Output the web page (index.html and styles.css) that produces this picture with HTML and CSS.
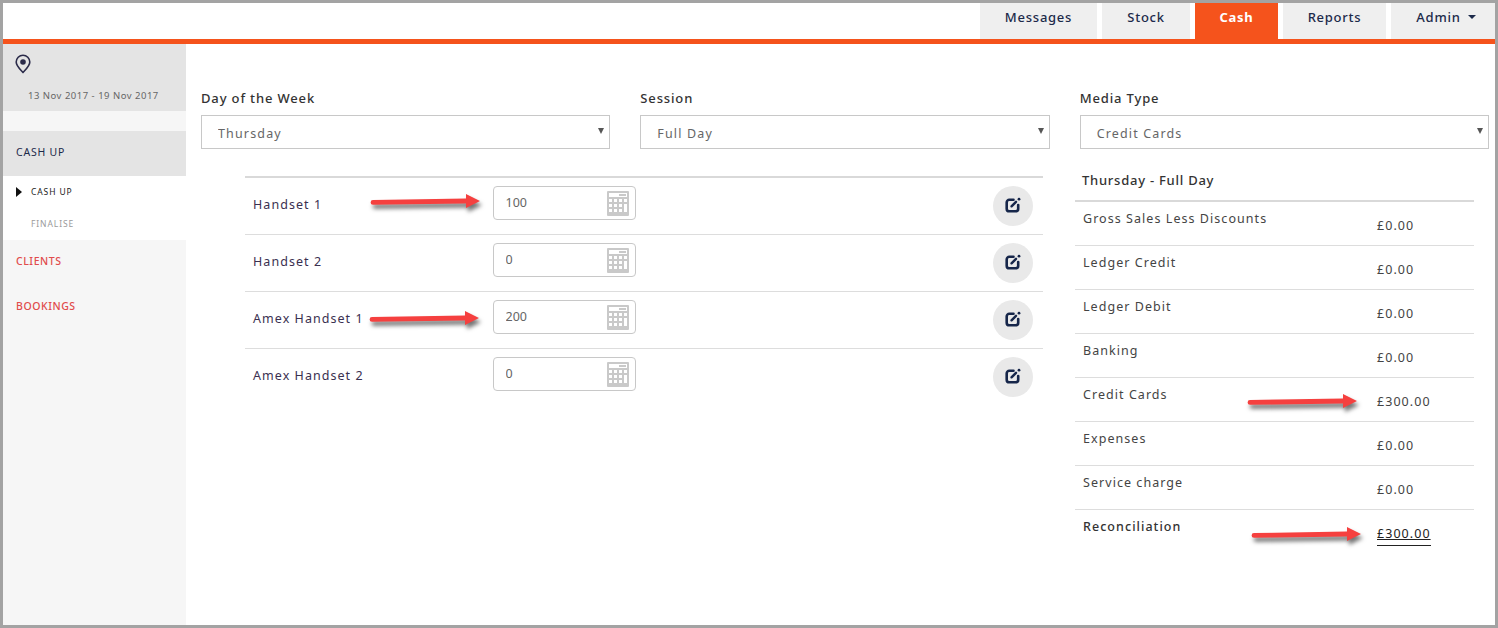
FILE: index.html
```html
<!DOCTYPE html>
<html lang="en">
<head>
<meta charset="utf-8">
<title>Cash Up</title>
<link rel="stylesheet" href="styles.css">
</head>
<body>
<div class="frame">
  <header class="topbar">
    <a class="tab tab-messages">Messages</a>
    <a class="tab tab-stock">Stock</a>
    <a class="tab tab-cash active">Cash</a>
    <a class="tab tab-reports">Reports</a>
    <a class="tab tab-admin">Admin <span class="caret"></span></a>
  </header>
  <div class="layout">
    <aside class="sidebar">
      <div class="site">
        <svg class="pin" viewBox="0 0 16 20" width="16" height="20"><path d="M8 1.2a6.8 6.8 0 0 0-6.8 6.8c0 3.9 3.6 6.9 6.8 10.4 3.2-3.5 6.8-6.500 6.800-10.400A6.800 6.800 0 0 0 8 1.200z" fill="none" stroke="#2b2b4a" stroke-width="1.600"/><circle cx="8" cy="8" r="2.800" fill="#2b2b4a"/></svg>
        <div class="dates">13 Nov 2017 - 19 Nov 2017</div>
      </div>
      <div class="spacer"></div>
      <div class="nav-current">CASH UP</div>
      <ul class="subnav">
        <li class="sub-active">CASH UP</li>
        <li>FINALISE</li>
      </ul>
      <div class="nav-link">CLIENTS</div>
      <div class="nav-link">BOOKINGS</div>
    </aside>
    <main class="main">
      <section class="filters">
        <div class="field">
          <label class="field-label" for="day">Day of the Week</label>
          <div class="select-wrap"><select id="day"><option>Thursday</option></select></div>
        </div>
        <div class="field">
          <label class="field-label" for="session">Session</label>
          <div class="select-wrap"><select id="session"><option>Full Day</option></select></div>
        </div>
        <div class="field">
          <label class="field-label" for="media">Media Type</label>
          <div class="select-wrap"><select id="media"><option>Credit Cards</option></select></div>
        </div>
      </section>
      <section class="content">
        <div class="handsets">
          <div class="handset">
            <span class="handset-name">Handset 1</span>
            <div class="amount"><input value="100"><svg class="calc" viewBox="0 0 22 25" width="22" height="25"><use href="#calc-icon"/></svg></div>
            <button class="edit"><svg viewBox="0 0 16 16" width="16" height="16"><use href="#edit-icon"/></svg></button>
          </div>
          <div class="handset">
            <span class="handset-name">Handset 2</span>
            <div class="amount"><input value="0"><svg class="calc" viewBox="0 0 22 25" width="22" height="25"><use href="#calc-icon"/></svg></div>
            <button class="edit"><svg viewBox="0 0 16 16" width="16" height="16"><use href="#edit-icon"/></svg></button>
          </div>
          <div class="handset">
            <span class="handset-name">Amex Handset 1</span>
            <div class="amount"><input value="200"><svg class="calc" viewBox="0 0 22 25" width="22" height="25"><use href="#calc-icon"/></svg></div>
            <button class="edit"><svg viewBox="0 0 16 16" width="16" height="16"><use href="#edit-icon"/></svg></button>
          </div>
          <div class="handset">
            <span class="handset-name">Amex Handset 2</span>
            <div class="amount"><input value="0"><svg class="calc" viewBox="0 0 22 25" width="22" height="25"><use href="#calc-icon"/></svg></div>
            <button class="edit"><svg viewBox="0 0 16 16" width="16" height="16"><use href="#edit-icon"/></svg></button>
          </div>
        </div>
        <div class="summary">
          <h2 class="summary-title">Thursday - Full Day</h2>
          <div class="summary-row"><span>Gross Sales Less Discounts</span><span class="val">£0.00</span></div>
          <div class="summary-row"><span>Ledger Credit</span><span class="val">£0.00</span></div>
          <div class="summary-row"><span>Ledger Debit</span><span class="val">£0.00</span></div>
          <div class="summary-row"><span>Banking</span><span class="val">£0.00</span></div>
          <div class="summary-row"><span>Credit Cards</span><span class="val">£300.00</span></div>
          <div class="summary-row"><span>Expenses</span><span class="val">£0.00</span></div>
          <div class="summary-row"><span>Service charge</span><span class="val">£0.00</span></div>
          <div class="summary-row total"><span>Reconciliation</span><span class="val"><span class="total-val">£300.00</span></span></div>
        </div>
      </section>
    </main>
  </div>
  <svg class="arrow arrow-1" viewBox="0 0 120 24" width="120" height="24"><use href="#arrow-shape"/></svg>
  <svg class="arrow arrow-2" viewBox="0 0 120 24" width="120" height="24"><use href="#arrow-shape"/></svg>
  <svg class="arrow arrow-3" viewBox="0 0 120 24" width="120" height="24"><use href="#arrow-shape"/></svg>
  <svg class="arrow arrow-4" viewBox="0 0 120 24" width="120" height="24"><use href="#arrow-shape"/></svg>
</div>
<svg class="defs" width="0" height="0">
  <defs>
    <symbol id="calc-icon" viewBox="0 0 22 25">
      <path fill="#c9c9c9" fill-rule="evenodd" d="M1 0h20a1 1 0 0 1 1 1v23a1 1 0 0 1-1 1H1a1 1 0 0 1-1-1V1a1 1 0 0 1 1-1zM2 2v4h18V2zM2 8v3h3V8zM7 8v3h3V8zM12 8v3h3V8zM17 8v3h3V8zM2 13v3h3v-3zM7 13v3h3v-3zM12 13v3h3v-3zM17 13v8h3v-8zM2 18v3h3v-3zM7 18v3h3v-3zM12 18v3h3v-3z"/>
      <rect x="12" y="3" width="7" height="2" fill="#c9c9c9"/>
    </symbol>
    <symbol id="edit-icon" viewBox="0 0 16 16">
      <path d="M8.500 2.800H4.300A2.600 2.600 0 0 0 1.700 5.400v6.300a2.600 2.600 0 0 0 2.600 2.600h6.300a2.600 2.600 0 0 0 2.600-2.600V8" fill="none" stroke="#16264a" stroke-width="2.600" stroke-linecap="round"/>
      <path d="M6.500 9.300L11 4.800" stroke="#16264a" stroke-width="2.400" stroke-linecap="round"/>
      <circle cx="14" cy="2.200" r="1.400" fill="#16264a"/>
    </symbol>
    <symbol id="arrow-shape" viewBox="0 0 120 24">
      <path d="M4 10L97 8.500V4L111 11L97 18V13.500L4 14.800a2.400 2.400 0 0 1 0-4.800z" fill="#f5403f"/>
    </symbol>
  </defs>
</svg>
</body>
</html>
```
FILE: styles.css
```css
* { box-sizing: border-box; }
html, body { margin: 0; padding: 0; }
body {
  font-family: "Noto Sans", "Open Sans", sans-serif;
  color: #333;
  background: #fff;
  width: 1498px;
  height: 628px;
  overflow: hidden;
}
.frame {
  position: relative;
  width: 1498px;
  height: 628px;
  border: 3px solid #a3a3a3;
  display: flex;
  flex-direction: column;
  background: #fff;
}
.defs { position: absolute; }

/* top bar */
.topbar {
  display: flex;
  justify-content: flex-end;
  height: 41px;
  border-bottom: 5px solid #f5531c;
  flex: none;
}
.tab {
  display: flex;
  align-items: center;
  justify-content: center;
  margin-left: 5px;
  height: 36px;
  background: #efefef;
  color: #1c2a4a;
  font-size: 13px;
  font-weight: 500;
  letter-spacing: .75px;
  padding-bottom: 8px;
}
.tab-messages { width: 117px; }
.tab-stock { width: 88px; }
.tab-cash { width: 83px; }
.tab-reports { width: 103px; }
.tab-admin { width: 104px; padding-left: 6px; }
.tab.active { background: #f5531c; color: #fff; font-weight: 700; }
.caret {
  display: inline-block;
  margin-left: 7px;
  border-left: 4px solid transparent;
  border-right: 4px solid transparent;
  border-top: 4px solid #1c2a4a;
}

/* layout */
.layout { display: flex; flex: 1; min-height: 0; }
.sidebar {
  width: 183px;
  flex: none;
  background: #f6f6f6;
  display: flex;
  flex-direction: column;
}
.site { height: 67px; background: #e4e4e4; padding: 10px 0 0 12px; }
.pin { display: block; }
.dates {
  margin-top: 15px;
  margin-left: 13px;
  font-size: 9.500px;
  letter-spacing: .5px;
  color: #666;
  line-height: 14px;
}
.spacer { height: 20px; }
.nav-current {
  height: 45px;
  background: #e4e4e4;
  padding: 0 0 3px 13px;
  display: flex;
  align-items: center;
  font-size: 10.500px;
  letter-spacing: .8px;
  color: #1c2a4a;
}
.subnav {
  list-style: none;
  margin: 0;
  padding: 1px 0 0 28px;
  background: #fff;
  height: 64px;
  font-size: 8.500px;
  letter-spacing: .9px;
  color: #9a9a9a;
}
.subnav li { height: 32px; line-height: 29px; position: relative; }
.sub-active { color: #222; }
.sub-active::before {
  content: "";
  position: absolute;
  left: -15px;
  top: 10px;
  border-top: 5px solid transparent;
  border-bottom: 5px solid transparent;
  border-left: 6px solid #111;
}
.nav-link {
  height: 45px;
  padding: 14px 0 0 13px;
  font-size: 10.500px;
  font-weight: 500;
  line-height: 14px;
  letter-spacing: .55px;
  color: #e14c4c;
}

/* main */
.main { flex: 1; padding: 41px 6px 0 15px; min-width: 0; }
.filters {
  display: grid;
  grid-template-columns: repeat(3, 1fr);
  column-gap: 30px;
}
.field-label {
  display: block;
  height: 30px;
  line-height: 27px;
  font-size: 13px;
  font-weight: 500;
  letter-spacing: .85px;
  color: #333;
}
.select-wrap { position: relative; }
.select-wrap::after {
  content: "";
  position: absolute;
  right: 6px;
  top: 13px;
  border-left: 3px solid transparent;
  border-right: 3px solid transparent;
  border-top: 6px solid #555;
}
.select-wrap select {
  display: block;
  width: 100%;
  height: 34px;
  appearance: none;
  -webkit-appearance: none;
  background: #fff;
  border: 1px solid #c8c8c8;
  border-radius: 0;
  padding: 2px 16px 0;
  font: inherit;
  font-size: 12.500px;
  letter-spacing: 1.150px;
  color: #666;
}

.content { display: flex; padding-top: 27px; align-items: flex-start; }
.handsets {
  width: 798px;
  margin-left: 44px;
  border-top: 2px solid #d9d9d9;
  flex: none;
}
.handset {
  height: 57px;
  border-bottom: 1px solid #ddd;
  display: flex;
  align-items: flex-start;
  padding: 8px 10px 0 8px;
}
.handset:last-child { border-bottom: 0; }
.handset-name {
  width: 240px;
  flex: none;
  font-size: 12.500px;
  letter-spacing: 1.050px;
  color: #3a3050;
  line-height: 38px;
}
.amount { position: relative; width: 143px; height: 34px; flex: none; }
.amount input {
  display: block;
  width: 100%;
  height: 34px;
  border: 1px solid #c8c8c8;
  border-radius: 4px;
  padding: 0 11.500px 2px;
  font: inherit;
  font-size: 12.500px;
  color: #666;
  background: #fff;
  outline: 0;
}
.calc { position: absolute; right: 7px; top: 5px; }
.edit {
  margin-left: auto;
  width: 40px;
  height: 40px;
  border: 0;
  padding: 0 0 2px;
  border-radius: 50%;
  background: #e9e9e9;
  display: flex;
  align-items: center;
  justify-content: center;
}

.summary { width: 399px; margin: -27px 0 0 32px; flex: none; }
.summary-title {
  margin: 0;
  height: 53px;
  padding: 21px 0 0 7px;
  border-bottom: 2px solid #d9d9d9;
  font-size: 13px;
  font-weight: 500;
  letter-spacing: .75px;
  line-height: 20px;
  color: #333;
}
.summary-row {
  display: grid;
  grid-template-columns: 302px 1fr;
  height: 44px;
  padding: 8px 0 0 8px;
  border-bottom: 1px solid #ddd;
  font-size: 12.500px;
  letter-spacing: 1.050px;
  line-height: 17px;
  color: #444;
}
.summary-row .val { padding-top: 7px; margin-left: -8px; color: #444; }
.summary-row.total { border-bottom: 0; font-weight: 500; color: #333; }
.total-val { display: inline-block; border-bottom: 1px solid #222; padding-bottom: 3px; text-decoration: underline; font-weight: 400; color: #222; }

/* annotations laid over the screenshot */
.arrow {
  position: absolute;
  filter: drop-shadow(2px 4px 2px rgba(0, 0, 0, .55));
}
.arrow-1 { left: 366px; top: 187px; }
.arrow-2 { left: 365px; top: 304px; }
.arrow-3 { left: 1243px; top: 387px; }
.arrow-4 { left: 1247px; top: 520px; }
```
